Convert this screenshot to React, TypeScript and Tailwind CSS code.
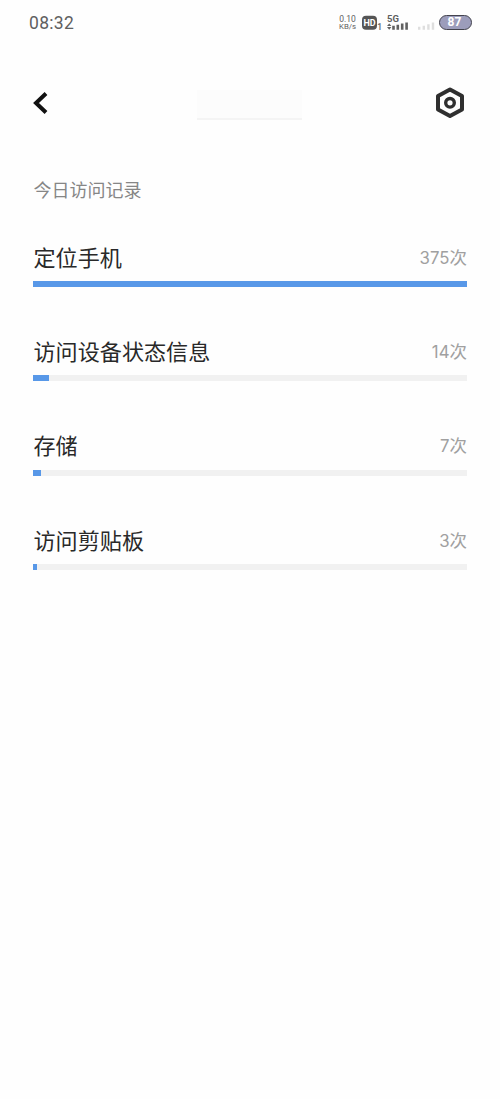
const registros = [
  { nome: '定位手机', vezes: 375, largura: 434 },
  { nome: '访问设备状态信息', vezes: 14, largura: 16 },
  { nome: '存储', vezes: 7, largura: 8 },
  { nome: '访问剪贴板', vezes: 3, largura: 3.5 },
];

function StatusBar() {
  return (
    <div className="flex h-[46px] items-center justify-between pl-[29px] pr-[28px] text-[#606060]">
      <span className="text-[17.5px] tracking-[0.3px] font-['Roboto',sans-serif]">08:32</span>

      <div className="flex h-[17px] items-start">
        <div className="flex w-[17px] flex-col items-center text-[8.5px] leading-[8px] whitespace-nowrap">
          <span>0.10</span>
          <span className="text-[7.8px]">KB/s</span>
        </div>
        <svg className="ml-[6px]" width="20" height="17" viewBox="0 0 20 17">
          <rect x="0" y="0.8" width="15" height="14" rx="4" fill="#555555" />
          <text x="7.5" y="11.2" textAnchor="middle" fontSize="9" fontWeight="700" fill="#ffffff" fontFamily="Roboto, sans-serif">HD</text>
          <text x="15.2" y="15" fontSize="8.5" fontWeight="500" fill="#606060" fontFamily="Roboto, sans-serif">1</text>
        </svg>
        <svg className="ml-[5px] overflow-visible" width="22" height="17" viewBox="0 0 22 17">
          <text x="0" y="7.4" fontSize="9.5" fontWeight="700" fill="#606060" fontFamily="Roboto, sans-serif">5G</text>
          <path d="M0 11 2.2 8.4 4.4 11zM0 12.1l2.2 2.6 2.2-2.6z" fill="#606060" />
          <path d="M5.2 10.8h2.6v4H5.2zM9.5 9.8h2.6v5H9.5zM13.9 8.6h2.6v6.2h-2.6zM18.3 7.4h2.6v7.4h-2.6z" fill="#606060" />
        </svg>
        <svg className="ml-[9px]" width="17" height="17" viewBox="0 0 17 17">
          <path d="M0 11.8h2.4v3H0zM4.6 10.8H7v4H4.6zM9.2 9.2h2.4v5.6H9.2zM13.8 7.4h2.4v7.4h-2.4z" fill="#dedede" />
        </svg>
        <div className="ml-[4px] flex h-[15px] w-[33px] justify-center rounded-full border-[1.5px] border-[#44444e] bg-[#9c9dbb] pr-[2px] text-[12px] leading-[13px] font-bold text-white">
          87
        </div>
      </div>
    </div>
  );
}

function Header() {
  return (
    <header className="flex h-[114px] items-center justify-between pl-[32px] pr-[34px]">
      <svg width="18" height="26" viewBox="0 0 18 26">
        <path d="M14 3.5 4 13 14 22.5" fill="none" stroke="#111111" strokeWidth="4" />
      </svg>
      <div className="mt-[4px] ml-[15px] h-[30px] w-[105px] border-b-2 border-[#f4f4f4] bg-[#fcfcfc]" />
      <svg width="32" height="32" viewBox="0 0 32 32" fill="none" stroke="#2f2f2f">
        <path d="M16 2.5 28 9.1v13.4L16 29.1 4 22.5V9.1z" strokeWidth="4" strokeLinejoin="round" />
        <circle cx="16" cy="15.8" r="4.3" strokeWidth="3.4" />
      </svg>
    </header>
  );
}

export default function App() {
  return (
    <div className="min-h-screen bg-[#fefefe] font-['Roboto','Noto_Sans_CJK_SC',sans-serif]">
      <StatusBar />
      <Header />

      <main className="px-[33px]">
        <h2 className="h-[60px] pl-[0.5px] text-[18px] leading-[62px] text-[#868686]">今日访问记录</h2>

        {registros.map((item) => (
          <div key={item.nome} className="h-[94.4px] pt-[22.5px]">
            <div className="flex h-[38.5px] items-start justify-between">
              <span className="pl-[0.5px] text-[22.1px] leading-[30px] text-[#292929]">{item.nome}</span>
              <span className="text-[17.5px] leading-[30px] text-[#a0a0a0]">
                <span className="text-[16.8px] font-['Inter',sans-serif]">{item.vezes}</span>次
              </span>
            </div>
            <div className="h-[6px] bg-[#f1f1f1]">
              <div className="h-full bg-[#5898e8]" style={{ width: item.largura }} />
            </div>
          </div>
        ))}
      </main>
    </div>
  );
}
